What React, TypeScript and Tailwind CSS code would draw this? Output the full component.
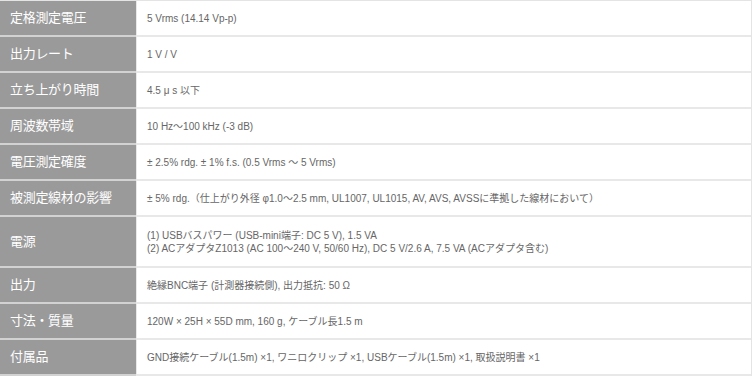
import React from "react";

const rows: { h: string; v: React.ReactNode; tall?: boolean }[] = [
  { h: "定格測定電圧", v: "5 Vrms (14.14 Vp-p)" },
  { h: "出力レート", v: "1 V / V" },
  { h: "立ち上がり時間", v: "4.5 μ s 以下" },
  { h: "周波数帯域", v: "10 Hz～100 kHz (-3 dB)" },
  { h: "電圧測定確度", v: "± 2.5% rdg. ± 1% f.s. (0.5 Vrms ～ 5 Vrms)" },
  {
    h: "被測定線材の影響",
    v: "± 5% rdg.（仕上がり外径 φ1.0～2.5 mm, UL1007, UL1015, AV, AVS, AVSSに準拠した線材において）",
  },
  {
    h: "電源",
    tall: true,
    v: (
      <>
        <div>(1) USBバスパワー (USB-mini端子: DC 5 V), 1.5 VA</div>
        <div>(2) ACアダプタZ1013 (AC 100～240 V, 50/60 Hz), DC 5 V/2.6 A, 7.5 VA (ACアダプタ含む)</div>
      </>
    ),
  },
  { h: "出力", v: "絶縁BNC端子 (計測器接続側), 出力抵抗: 50 Ω" },
  { h: "寸法・質量", v: "120W × 25H × 55D mm, 160 g, ケーブル長1.5 m" },
  {
    h: "付属品",
    v: "GND接続ケーブル(1.5m) ×1, ワニロクリップ ×1, USBケーブル(1.5m) ×1, 取扱説明書 ×1",
  },
];

export default function App() {
  return (
    <div
      className="w-[755px] h-[378px] bg-white overflow-hidden"
      style={{ fontFamily: '"Liberation Sans", "Noto Sans CJK JP", sans-serif' }}
    >
      <div className="w-[752px] border-t border-r border-[#e4e4e4] flex flex-col">
        {rows.map((r, i) => (
          <div key={i} className={`flex ${r.tall ? "h-[51px]" : "h-[36px]"}`}>
            <div className="w-[136px] shrink-0 bg-[#9a9a9a] border-b-2 border-[#d2d2d2] flex items-center pl-[10px] text-white text-[13px] tracking-[-0.3px]">
              {r.h}
            </div>
            <div className="flex-1 border-b-2 border-l border-[#e8e8e8] flex flex-col justify-center pl-[10px] text-[#666] text-[10px] leading-[13px]">
              {r.v}
            </div>
          </div>
        ))}
      </div>
    </div>
  );
}
